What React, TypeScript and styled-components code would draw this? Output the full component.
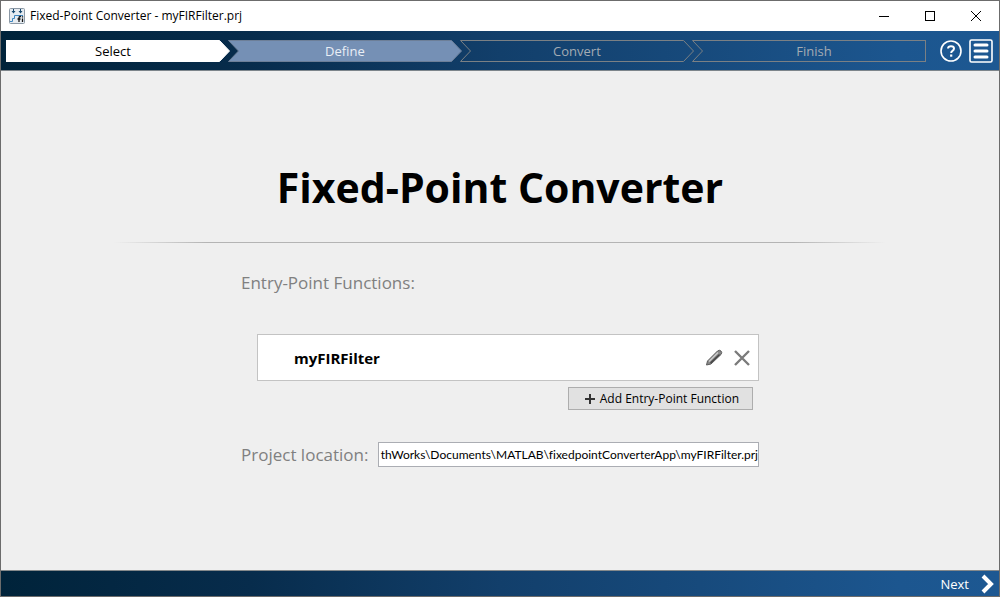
import React from "react";
import styled, { createGlobalStyle } from "styled-components";

const Global = createGlobalStyle`
  * { box-sizing: border-box; }
  html, body, #root { height: 100%; }
  body { margin: 0; font-family: "Open Sans", "Noto Sans", sans-serif; font-size: 12px; color: #000; }
  button, input { font: inherit; color: inherit; margin: 0; }
  button { padding: 0; border: 0; background: none; display: flex; align-items: center; }
  svg { display: block; flex: none; }
`;

const navy = "linear-gradient(to right, #00233a, #072c4c 25%, #123f6b 50%, #174a7c 70%, #1c568f 90%, #1d5892)";

const Window = styled.div`
  min-height: 100%;
  display: flex;
  flex-direction: column;
  border: 1px solid #6c6c6c;
  background: #efefef;
`;

const TitleBar = styled.header`
  height: 30px;
  display: flex;
  align-items: center;
  gap: 5px;
  padding-left: 8px;
  background: #fff;
`;

const Caption = styled.span`
  flex: 1;
  line-height: 16px;
`;

const WindowButtons = styled.div`
  display: flex;
`;

const WindowButton = styled.button`
  width: 46px;
  height: 30px;
  justify-content: center;
`;

const StepBar = styled.nav`
  height: 40px;
  display: flex;
  align-items: center;
  gap: 6px;
  padding: 0 6px 0 5px;
  background: ${navy};
  border-bottom: 1px solid #7d858b;
`;

const Steps = styled.div`
  flex: 1;
  display: flex;
  margin-right: 7px;
`;

type StepKind = "current" | "ready" | "pending";
const fills = { current: "#fff", ready: "#7590b5", pending: "transparent" };
const strokes = { current: "#fff", ready: "#6d7f98", pending: "#7b8084" };
const texts = { current: "#000", ready: "#e9eef5", pending: "#a3abb3" };

const StepButton = styled.button<{ $kind: StepKind; $first: boolean }>`
  flex: ${(p) => (p.$first ? 22 : 23)} 1 0;
  height: 22px;
  font-size: 13px;
  color: ${(p) => texts[p.$kind]};
  & + & { margin-left: -2px; }
`;

const StepFace = styled.span<{ $kind: StepKind; $first: boolean; $last: boolean }>`
  flex: 1;
  height: 22px;
  line-height: 20px;
  background: ${(p) => fills[p.$kind]};
  border: 0 solid ${(p) => strokes[p.$kind]};
  border-width: 1px ${(p) => (p.$last ? 1 : 0)}px 1px ${(p) => (p.$first ? 1 : 0)}px;
`;

const IconButton = styled.button`
  width: 24px;
  height: 24px;
  justify-content: center;
`;

const Main = styled.main`
  flex: 1;
  display: flex;
  flex-direction: column;
  align-items: center;
  padding: 86px 16px 32px;
`;

const Title = styled.h1`
  margin: 0;
  font-size: 41px;
  line-height: 60px;
  font-weight: 700;
`;

const Rule = styled.hr`
  width: 80%;
  height: 1px;
  margin: 25px 0 28px;
  border: 0;
  background: linear-gradient(to right, transparent, #b4b4b4 12%, #b4b4b4 88%, transparent);
`;

const Form = styled.form`
  width: 518px;
  max-width: 100%;
`;

const Heading = styled.h2`
  margin: 0 0 39px;
  font-size: 17px;
  line-height: 24px;
  font-weight: 400;
  color: #808080;
`;

const Entry = styled.div`
  height: 47px;
  display: flex;
  align-items: center;
  gap: 4px;
  margin-left: 16px;
  padding: 0 4px 0 36px;
  background: #fff;
  border: 1px solid #c3c3c3;
`;

const EntryName = styled.span`
  flex: 1;
  font-size: 15px;
  line-height: 20px;
  font-weight: 700;
`;

const AddButton = styled.button`
  width: 185px;
  height: 23px;
  justify-content: flex-end;
  gap: 5px;
  margin: 6px 6px 0 auto;
  padding-right: 13px;
  background: #e1e1e1;
  border: 1px solid #adadad;
`;

const Location = styled.div`
  display: flex;
  align-items: center;
  gap: 10px;
  margin-top: 32px;
`;

const LocationLabel = styled.label`
  width: 127px;
  font-size: 17px;
  line-height: 24px;
  white-space: nowrap;
  color: #808080;
`;

const LocationInput = styled.input`
  flex: 1;
  min-width: 0;
  height: 25px;
  padding: 0;
  font-family: Lato, "Open Sans", sans-serif;
  font-size: 12px;
  font-variant-ligatures: none;
  text-align: right;
  background: #fff;
  border: 1px solid #abadb3;
  border-radius: 0;
`;

const Footer = styled.footer`
  height: 26px;
  display: flex;
  justify-content: flex-end;
  padding-right: 5px;
  background: ${navy};
  border-top: 1px solid #85898b;
`;

const NextButton = styled.button`
  gap: 12px;
  font-size: 13px;
  color: #fff;
`;

function Step({ label, kind, first = false, last = false }: { label: string; kind: StepKind; first?: boolean; last?: boolean }) {
  return (
    <StepButton type="button" $kind={kind} $first={first} aria-current={kind === "current" ? "step" : undefined}>
      {!first && (
        <svg width="11" height="22" viewBox="0 0 11 22">
          <path d="M11 .5H.5L10.5 11L.5 21.5H11" fill={fills[kind]} stroke={strokes[kind]} />
        </svg>
      )}
      <StepFace $kind={kind} $first={first} $last={last}>{label}</StepFace>
      {!last && (
        <svg width="11" height="22" viewBox="0 0 11 22">
          <path d="M0 .5H.5L10.5 11L.5 21.5H0" fill={fills[kind]} stroke={strokes[kind]} />
        </svg>
      )}
    </StepButton>
  );
}

export default function App() {
  return (
    <>
      <Global />
      <Window>
        <TitleBar>
          <svg width="16" height="16" viewBox="0 0 16 16">
            <rect x=".5" y=".5" width="15" height="15" rx="1" fill="#e6ebf0" stroke="#8b98a5" />
            <path d="M1 13.500H3.500V10.500H5.500V7.500H14" fill="none" stroke="#3f87c0" />
            <path d="M4.500 1v3M11.500 1v3" stroke="#17496f" />
            <path d="M2.500 3h4l-2 2.500zM9.500 3h4l-2 2.500z" fill="#17496f" />
            <path d="M12 8.500h-.8q-1.200 0-1.200 1.200V14M8.500 11h3M13.500 10.500v3.500M13.500 8.200v1.200" fill="none" stroke="#111" strokeWidth="1.300" />
          </svg>
          <Caption>Fixed-Point Converter - myFIRFilter.prj</Caption>
          <WindowButtons>
            <WindowButton type="button" aria-label="Minimize">
              <svg width="10" height="10"><path d="M0 5.500H10" stroke="#000" /></svg>
            </WindowButton>
            <WindowButton type="button" aria-label="Maximize">
              <svg width="10" height="10"><rect x=".5" y=".5" width="9" height="9" fill="none" stroke="#000" /></svg>
            </WindowButton>
            <WindowButton type="button" aria-label="Close">
              <svg width="10" height="10"><path d="M0 0L10 10M10 0L0 10" stroke="#000" /></svg>
            </WindowButton>
          </WindowButtons>
        </TitleBar>
        <StepBar>
          <Steps>
            <Step label="Select" kind="current" first />
            <Step label="Define" kind="ready" />
            <Step label="Convert" kind="pending" />
            <Step label="Finish" kind="pending" last />
          </Steps>
          <IconButton type="button" aria-label="Help">
            <svg width="22" height="22" viewBox="0 0 22 22" fill="none" stroke="#fff">
              <circle cx="11" cy="11" r="10" strokeWidth="1.600" />
              <path d="M8 8.500Q8.200 6.200 11 6.200Q14 6.200 14 8.600Q14 10 12.500 10.900Q11.200 11.700 11.200 13" strokeWidth="2" />
              <path d="M11.200 14.500v2.200" strokeWidth="2.200" />
            </svg>
          </IconButton>
          <IconButton type="button" aria-label="Menu">
            <svg width="24" height="24" viewBox="0 0 24 24" fill="none" stroke="#fff">
              <rect x="1" y="1" width="22" height="22" rx="1.500" strokeWidth="1.600" />
              <path d="M6 6H18M6 12H18M6 18H18" strokeWidth="3" strokeLinecap="round" />
            </svg>
          </IconButton>
        </StepBar>
        <Main>
          <Title>Fixed-Point Converter</Title>
          <Rule />
          <Form onSubmit={(e) => e.preventDefault()}>
            <Heading>Entry-Point Functions:</Heading>
            <Entry>
              <EntryName>myFIRFilter</EntryName>
              <IconButton type="button" aria-label="Edit">
                <svg width="18" height="18" viewBox="0 0 18 18">
                  <path d="M1.500 16L2.500 12L12.500 2Q14.500 .5 16 2Q17.500 3.500 16 5.500L6 15Z" fill="#888" stroke="#5c5c5c" />
                  <path d="M4 12.500L13 3.500" stroke="#ccc" strokeWidth="1.500" />
                  <path d="M5.500 14L14.500 5.500" stroke="#444" strokeWidth="1.300" />
                </svg>
              </IconButton>
              <IconButton type="button" aria-label="Remove">
                <svg width="16" height="16"><path d="M1 1L15 15M15 1L1 15" stroke="#7b7b7b" strokeWidth="2.400" /></svg>
              </IconButton>
            </Entry>
            <AddButton type="button">
              <svg width="10" height="10"><path d="M5 0V10M0 5H10" stroke="#333" strokeWidth="2" /></svg>
              Add Entry-Point Function
            </AddButton>
            <Location>
              <LocationLabel htmlFor="location">Project location:</LocationLabel>
              <LocationInput id="location" type="text" defaultValue="thWorks\Documents\MATLAB\fixedpointConverterApp\myFIRFilter.prj" />
            </Location>
          </Form>
        </Main>
        <Footer>
          <NextButton type="button">
            Next
            <svg width="13" height="20" viewBox="0 0 13 20"><path d="M2 2L10 10L2 18" fill="none" stroke="#fff" strokeWidth="4" /></svg>
          </NextButton>
        </Footer>
      </Window>
    </>
  );
}
